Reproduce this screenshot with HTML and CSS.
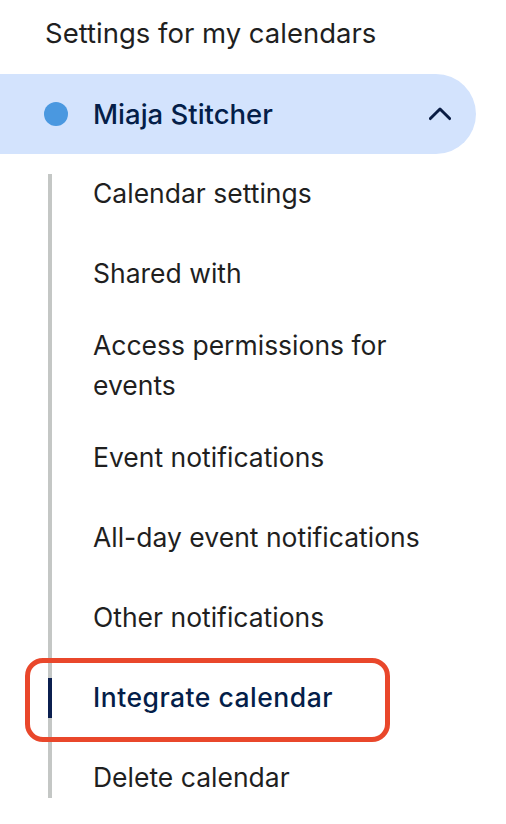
FILE: index.html
```html
<!DOCTYPE html>
<html lang="en">
<head>
    <meta charset="UTF-8">
    <meta name="viewport" content="width=device-width, initial-scale=1.0">
    <title>Settings for my calendars</title>
    <link rel="stylesheet" href="styles.css">
</head>
<body>
    <div class="sidebar">
        <h2 class="section-title">Settings for my calendars</h2>

        <div class="calendar-row">
            <span class="calendar-dot"></span>
            <span class="calendar-name">Miaja Stitcher</span>
            <svg class="chevron" width="24" height="24" viewBox="0 0 24 24">
                <polyline points="1.5,17 12,6.5 22.5,17" fill="none" stroke="#0b1d44" stroke-width="3.2" stroke-linecap="round" stroke-linejoin="round"/>
            </svg>
        </div>

        <ul class="sub-list">
            <li class="sub-item">Calendar settings</li>
            <li class="sub-item">Shared with</li>
            <li class="sub-item">Access permissions for events</li>
            <li class="sub-item">Event notifications</li>
            <li class="sub-item">All-day event notifications</li>
            <li class="sub-item">Other notifications</li>
            <li class="sub-item active">Integrate calendar</li>
            <li class="sub-item">Delete calendar</li>
        </ul>
    </div>
</body>
</html>
```

FILE: styles.css
```css
body {
    margin: 0;
    background-color: #ffffff;
    font-family: Inter, Roboto, "Noto Sans", Arial, sans-serif;
    color: #1f1f1f;
}
.sidebar {
    width: 506px;
}
.section-title {
    margin: 0 0 21px 0;
    padding: 13px 0 0 45px;
    font-size: 27.5px;
    line-height: 40px;
    font-weight: 400;
    color: #1f1f1f;
}
.calendar-row {
    display: flex;
    align-items: center;
    width: 476px;
    height: 80px;
    box-sizing: border-box;
    padding-left: 44px;
    background-color: #d3e3fd;
    border-radius: 0 40px 40px 0;
}
.calendar-dot {
    width: 24px;
    height: 24px;
    border-radius: 50%;
    background-color: #4a98e0;
    flex-shrink: 0;
}
.calendar-name {
    margin-left: 25px;
    font-size: 27.5px;
    font-weight: 500;
    color: #041e49;
    flex: 1;
}
.chevron {
    width: 22px;
    height: 22px;
    margin-right: 25px;
}
.sub-list {
    list-style: none;
    margin: 0;
    padding: 0;
    background: linear-gradient(#c4c7c5, #c4c7c5) no-repeat 48px 20px / 4px calc(100% - 40px);
}
.sub-item {
    display: flex;
    align-items: center;
    min-height: 80px;
    box-sizing: border-box;
    padding: 11px 66px 13px 93px;
    font-size: 26.5px;
    line-height: 40px;
}
.sub-item.active {
    position: relative;
    color: #041e49;
    font-weight: 500;
    letter-spacing: 0.5px;
    background: linear-gradient(#0b1f4f, #0b1f4f) no-repeat 48px center / 4px 40px;
}
.sub-item.active::after {
    content: "";
    position: absolute;
    left: 25px;
    top: 0;
    width: 365px;
    height: 84px;
    box-sizing: border-box;
    border: 5px solid #e9472b;
    border-radius: 18px;
}
```
